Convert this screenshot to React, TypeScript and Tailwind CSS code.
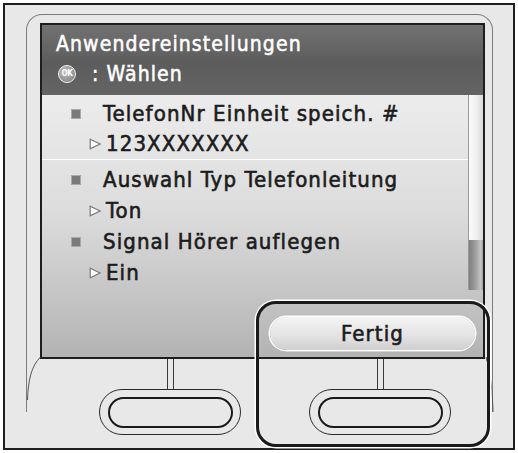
import React from "react";

const font = "font-['DejaVu_Sans_Condensed','DejaVu_Sans',sans-serif] font-stretch-condensed";

function Tri() {
  return (
    <svg width="12" height="12" viewBox="0 0 12 12" className="shrink-0">
      <polygon points="1.2,1.2 11,6 1.2,10.8" fill="#ffffff" stroke="#7a7a7a" strokeWidth="1.2" />
    </svg>
  );
}

function Bullet() {
  return <div className="w-[10px] h-[10px] shrink-0 bg-[#7a7a7a] border border-[#a8a8a8]" />;
}

const txt = "text-[22px] leading-none text-[#1c1c1c] tracking-[1.1px] [-webkit-text-stroke:0.6px_#1c1c1c]";

function Item({ title, value, first }: { title: string; value: string; first?: boolean }) {
  return (
    <div className={first ? "pt-[3px]" : ""}>
      <div className="h-[31px] flex items-center pl-[29px] gap-[22px]">
        <Bullet />
        <span className={txt}>{title}</span>
      </div>
      <div className={(first ? "h-[30px]" : "h-[31px]") + " flex items-center pl-[47px] gap-[5px]"}>
        <Tri />
        <span className={txt}>{value}</span>
      </div>
    </div>
  );
}

export default function App() {
  return (
    <div className={"relative w-[518px] h-[453px] bg-white p-[3px] " + font}>
      <div className="h-full border-2 border-[#1e1e1e] bg-[#e8e8e8] pl-[21px] pr-[20px] pt-[9px]">
        {/* bezel */}
        <div className="h-[398px] border-l border-t border-r border-[#7c7c7c] rounded-t-[16px] pl-[13px] pr-[7px] pt-[8px]">
          {/* screen */}
          <div className="h-[336px] border-2 border-[#1e1e1e] flex flex-col">
            <div className="h-[70px] shrink-0 bg-[linear-gradient(to_bottom,#727272,#5c5c5c_55%,#646464)] pl-[14px] pt-[7px] text-white">
              <div className="text-[21px] leading-[24px] tracking-[1.1px] [-webkit-text-stroke:0.5px_#ffffff]">Anwendereinstellungen</div>
              <div className="flex items-center mt-[6px] pl-[2px]">
                <div className="w-[18px] h-[18px] rounded-full border border-[#f4f4f4] bg-[radial-gradient(circle_at_40%_35%,#bdbdbd,#7c7c7c)] flex items-center justify-center">
                  <span className="text-[8px] font-bold leading-none text-white tracking-[-0.3px]">OK</span>
                </div>
                <span className="text-[21px] leading-[24px] ml-[16px] tracking-[1.1px] [-webkit-text-stroke:0.5px_#ffffff]">: Wählen</span>
              </div>
            </div>
            <div className="flex-1 flex flex-col bg-[linear-gradient(to_bottom,#ececec,#dcdcdc_45%,#b3b3b3)]">
              <div className="h-[195px] flex">
                <div className="flex-1">
                  <Item first title="TelefonNr Einheit speich. #" value="123XXXXXXX" />
                  <div className="h-px bg-white" />
                  <div className="pt-[4px]">
                    <Item title="Auswahl Typ Telefonleitung" value="Ton" />
                    <Item title="Signal Hörer auflegen" value="Ein" />
                  </div>
                </div>
                <div className="w-[15px] flex flex-col border-l border-[#9a9a9a]">
                  <div className="h-[145px] bg-[linear-gradient(to_right,#fbfbfb,#eeeeee_60%,#d6d6d6)]" />
                  <div className="h-[50px] bg-[linear-gradient(to_right,#7e7e7e,#a2a2a2_50%,#c4c4c4_85%,#a0a0a0)]" />
                </div>
              </div>
              <div className="flex-1 pt-[27px] pl-[228px]">
                <div className="w-[205px] h-[33px] rounded-full bg-[linear-gradient(to_bottom,#f4f4f4,#e2e2e2_60%,#cfcfcf)] ring-[1.5px] ring-white shadow-[0_1px_2px_rgba(0,0,0,0.35)] flex items-center justify-center">
                  <span className={txt}>Fertig</span>
                </div>
              </div>
            </div>
          </div>
          {/* hardware buttons */}
          <div className="flex pl-[59px] gap-[68px]">
            {[0, 1].map((i) => (
              <div key={i} className="w-[142px] flex flex-col items-center">
                <div className="w-[7px] h-[30px] border-l border-r border-[#3a3a3a]" />
                <div className="w-[142px] h-[46px] rounded-full border border-[#2a2a2a] flex items-center justify-center">
                  <div className="w-[125px] h-[31px] rounded-full border-[2.5px] border-[#1a1a1a]" />
                </div>
              </div>
            ))}
          </div>
        </div>
      </div>
      {/* bezel curves */}
      <svg className="absolute inset-0 pointer-events-none" width="518" height="453" viewBox="0 0 518 453">
        <path d="M40.5,357 C31,366 28,382 27.5,400" fill="none" stroke="#555" strokeWidth="1" />
        <path d="M486,357 C490.5,372 492.5,392 493,412" fill="none" stroke="#555" strokeWidth="1" />
      </svg>
      {/* highlight */}
      <div className="absolute left-[256px] top-[301px] w-[234px] h-[146px] rounded-[20px] border-[3px] border-[#1a1a1a] shadow-[0_0_0_1.5px_#ffffff]" />
    </div>
  );
}
